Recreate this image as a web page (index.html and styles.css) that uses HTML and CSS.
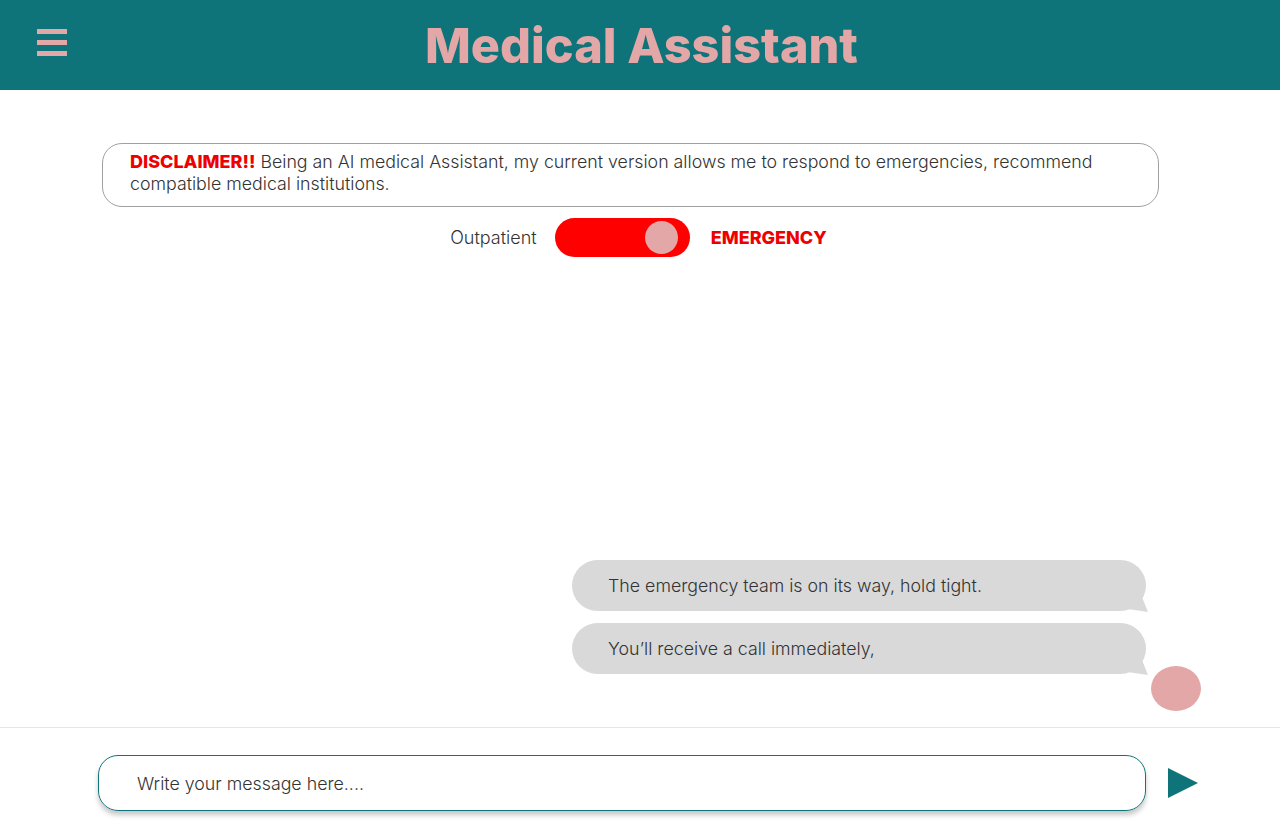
FILE: index.html
```html
<!DOCTYPE html>
<html lang="en">
<head>
<meta charset="utf-8">
<title>Medical Assistant</title>
<link rel="stylesheet" href="styles.css">
</head>
<body>
<div class="app">
  <header class="header">
    <button class="menu" aria-label="Menu">
      <span class="bar"></span><span class="bar"></span><span class="bar"></span>
    </button>
    <h1 class="title">Medical Assistant</h1>
  </header>
  <main class="main">
    <div class="disclaimer">
      <strong class="disc-label">DISCLAIMER!!</strong> Being an AI medical Assistant, my current version allows me to respond to emergencies, recommend compatible medical institutions.
    </div>
    <div class="mode-row">
      <span class="mode-off">Outpatient</span>
      <span class="toggle"><span class="knob"></span></span>
      <span class="mode-on">EMERGENCY</span>
    </div>
    <section class="chat">
      <div class="thread">
        <div class="messages">
          <div class="bubble">The emergency team is on its way, hold tight.</div>
          <div class="bubble">You’ll receive a call immediately,</div>
        </div>
        <div class="avatar"></div>
      </div>
    </section>
  </main>
  <footer class="composer">
    <div class="input">Write your message here....</div>
    <button class="send" aria-label="Send">
      <svg width="30" height="30" viewBox="0 0 30 30"><polygon points="0,0 30,15 0,30" fill="#0f7479"/></svg>
    </button>
  </footer>
</div>
</body>
</html>
```
FILE: styles.css
```css
* { box-sizing: border-box; }
html, body { margin: 0; padding: 0; }
body {
  font-family: Inter, "Noto Sans", sans-serif;
  font-weight: 300;
  color: #333;
  background: #fff;
}
.app {
  width: 1280px;
  height: 832px;
  display: flex;
  flex-direction: column;
  overflow: hidden;
}
.header {
  height: 90px;
  flex: none;
  background: #0f7479;
  display: flex;
  align-items: center;
  position: relative;
}
.menu {
  margin-left: 37px;
  margin-top: -5px;
  width: 30px;
  padding: 0;
  border: 0;
  background: none;
  display: flex;
  flex-direction: column;
  gap: 6px;
}
.bar {
  display: block;
  height: 5px;
  width: 30px;
  background: #e3a7a8;
}
.title {
  margin: 2px 0 0 358px;
  font-size: 48.6px;
  font-weight: 800;
  color: #e3a7a8;
  line-height: 1;
}
.main {
  flex: 1;
  display: flex;
  flex-direction: column;
  min-height: 0;
}
.disclaimer {
  margin: 53px 0 0 102px;
  width: 1057px;
  border: 1px solid #a0a0a0;
  border-radius: 20px;
  padding: 7px 27px 11px 27px;
  font-size: 17.8px;
  line-height: 22px;
  color: #333;
}
.disc-label {
  color: #ee0000;
  font-size: 18px;
  font-weight: 800;
}
.mode-row {
  margin-top: 11px;
  display: flex;
  align-items: center;
  justify-content: center;
  gap: 18px;
  padding-right: 12px;
  height: 39px;
}
.mode-off { font-size: 18px; color: #333; margin-left: 9px; }
.toggle {
  width: 135px;
  height: 39px;
  border-radius: 20px;
  background: #ff0000;
  display: flex;
  align-items: center;
  justify-content: flex-end;
  padding-right: 12px;
}
.knob {
  width: 33px;
  height: 33px;
  border-radius: 50%;
  background: #e3a7a8;
}
.mode-on {
  font-size: 18px;
  font-weight: 800;
  color: #ee0000;
  margin-left: 3px;
}
.chat {
  flex: 1;
  display: flex;
  flex-direction: column;
  justify-content: flex-end;
  padding-bottom: 16px;
}
.thread {
  display: flex;
  align-items: flex-end;
  padding-left: 572px;
}
.messages {
  width: 574px;
  display: flex;
  flex-direction: column;
  gap: 12px;
  padding-bottom: 37px;
}
.bubble {
  position: relative;
  height: 51px;
  border-radius: 26px;
  background: #d9d9d9;
  display: flex;
  align-items: center;
  padding-left: 36px;
  font-size: 17.8px;
  color: #333;
}
.bubble::after {
  content: "";
  position: absolute;
  right: -2px;
  bottom: -1px;
  width: 22px;
  height: 22px;
  background: #d9d9d9;
  clip-path: polygon(60% 0, 100% 100%, 0 85%, 30% 70%);
}
.avatar {
  width: 50px;
  height: 45px;
  border-radius: 50%;
  background: #e3a7a8;
  margin-left: 5px;
}
.composer {
  flex: none;
  height: 105px;
  border-top: 1px solid #e6e6e6;
  display: flex;
  align-items: flex-start;
  padding-top: 27px;
  padding-left: 98px;
}
.input {
  width: 1048px;
  height: 56px;
  border: 1px solid #0f7479;
  border-radius: 20px;
  box-shadow: 0 4px 5px rgba(0, 0, 0, 0.22);
  display: flex;
  align-items: center;
  padding-left: 38px;
  font-size: 17.8px;
  color: #333;
}
.send {
  margin-left: 22px;
  margin-top: 13px;
  padding: 0;
  border: 0;
  background: none;
  display: block;
  line-height: 0;
}
```
